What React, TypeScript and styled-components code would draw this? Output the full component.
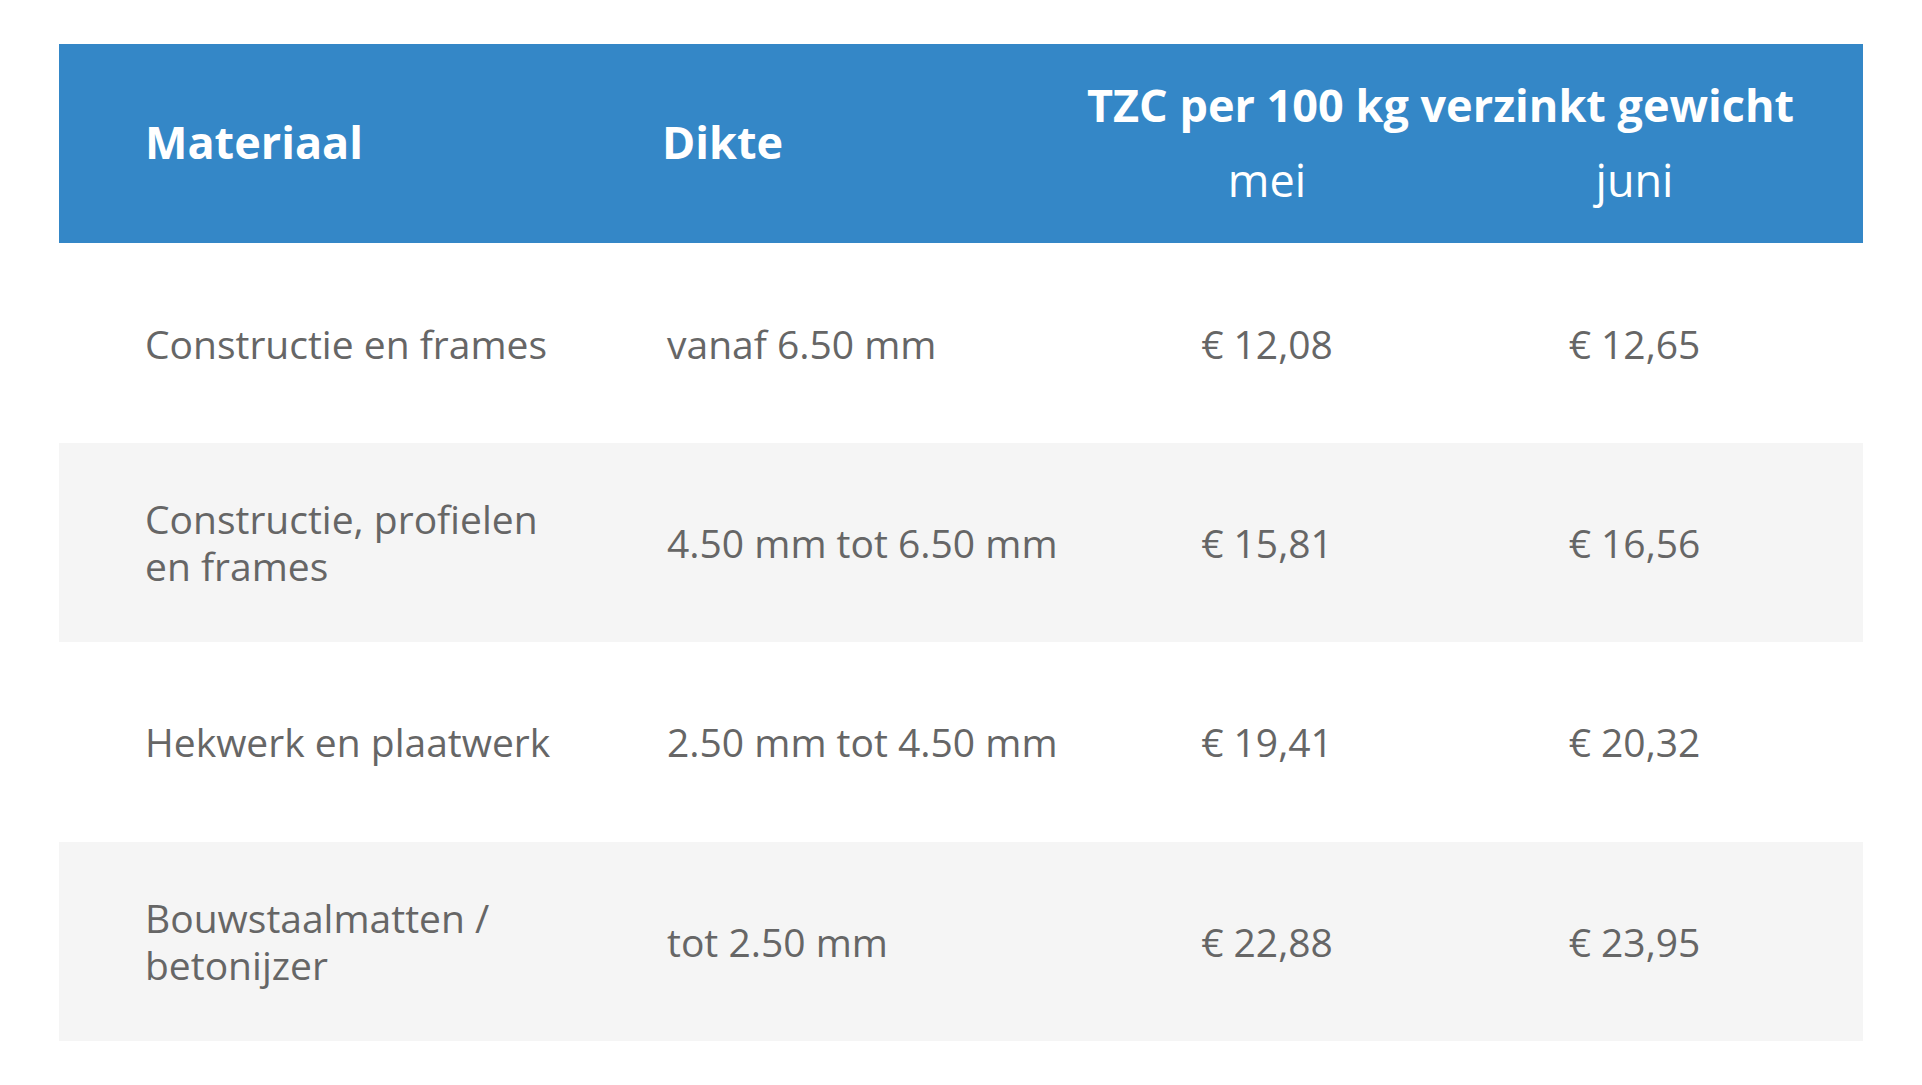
import React from 'react';
import styled, { createGlobalStyle } from 'styled-components';

interface PriceRow {
  material: string[];
  thickness: string;
  may: string;
  june: string;
}

const rows: PriceRow[] = [
  { material: ['Constructie en frames'], thickness: 'vanaf 6.50 mm', may: '€ 12,08', june: '€ 12,65' },
  { material: ['Constructie, profielen', 'en frames'], thickness: '4.50 mm tot 6.50 mm', may: '€ 15,81', june: '€ 16,56' },
  { material: ['Hekwerk en plaatwerk'], thickness: '2.50 mm tot 4.50 mm', may: '€ 19,41', june: '€ 20,32' },
  { material: ['Bouwstaalmatten /', 'betonijzer'], thickness: 'tot 2.50 mm', may: '€ 22,88', june: '€ 23,95' },
];

const App: React.FC = () => {
  return (
    <>
      <GlobalStyle />
      <Page>
        <Table>
          <Header>
            <HeadLabel $col={1}>Materiaal</HeadLabel>
            <HeadLabel $col={2}>Dikte</HeadLabel>
            <HeadGroup>TZC per 100 kg verzinkt gewicht</HeadGroup>
            <HeadMonth $col={3}>mei</HeadMonth>
            <HeadMonth $col={4}>juni</HeadMonth>
          </Header>
          {rows.map((row, i) => (
            <Row key={i} $striped={i % 2 === 1}>
              <MaterialCell>
                {row.material.map((line) => (
                  <MaterialLine key={line}>{line}</MaterialLine>
                ))}
              </MaterialCell>
              <ThicknessCell>{row.thickness}</ThicknessCell>
              <PriceCell>{row.may}</PriceCell>
              <PriceCell>{row.june}</PriceCell>
            </Row>
          ))}
        </Table>
      </Page>
    </>
  );
};

export default App;

const GlobalStyle = createGlobalStyle`
  html, body {
    margin: 0;
    padding: 0;
    background: #ffffff;
  }

  body {
    font-family: "Open Sans", "Liberation Sans", sans-serif;
  }
`;

const Page = styled.div`
  padding: 44px 59px 44px 59px;
`;

const Table = styled.div`
  display: flex;
  flex-direction: column;
`;

const columns = `86px 517px 420px 370px 365px 46px`;

const Header = styled.div`
  display: grid;
  grid-template-columns: ${columns};
  grid-template-rows: 75px 75px;
  padding: 23px 0 25px;
  height: 199.4px;
  box-sizing: border-box;
  background: #3487c7;
  color: #ffffff;
  font-size: 45px;
`;

const HeadLabel = styled.div<{ $col: number }>`
  grid-column: ${(p) => p.$col + 1};
  grid-row: 1 / span 2;
  align-self: center;
  font-weight: 700;
  line-height: 1.2;
`;

const HeadGroup = styled.div`
  grid-column: 4 / span 2;
  grid-row: 1;
  align-self: center;
  text-align: center;
  font-weight: 700;
  line-height: 1.2;
  white-space: nowrap;
  margin-left: -18px;
`;

const HeadMonth = styled.div<{ $col: number }>`
  grid-column: ${(p) => p.$col + 1};
  grid-row: 2;
  align-self: center;
  text-align: center;
  font-weight: 400;
  line-height: 1.2;
`;

const Row = styled.div<{ $striped: boolean }>`
  display: grid;
  grid-template-columns: ${columns};
  align-items: center;
  height: 199.4px;
  background: ${(p) => (p.$striped ? '#f5f5f5' : '#ffffff')};
  color: #666666;
  font-size: 39px;
`;

const MaterialCell = styled.div`
  grid-column: 2;
  display: flex;
  flex-direction: column;
`;

const MaterialLine = styled.div`
  line-height: 47px;
`;

const ThicknessCell = styled.div`
  grid-column: 3;
  padding-left: 5px;
  line-height: 47px;
`;

const PriceCell = styled.div`
  text-align: center;
  line-height: 47px;
`;
